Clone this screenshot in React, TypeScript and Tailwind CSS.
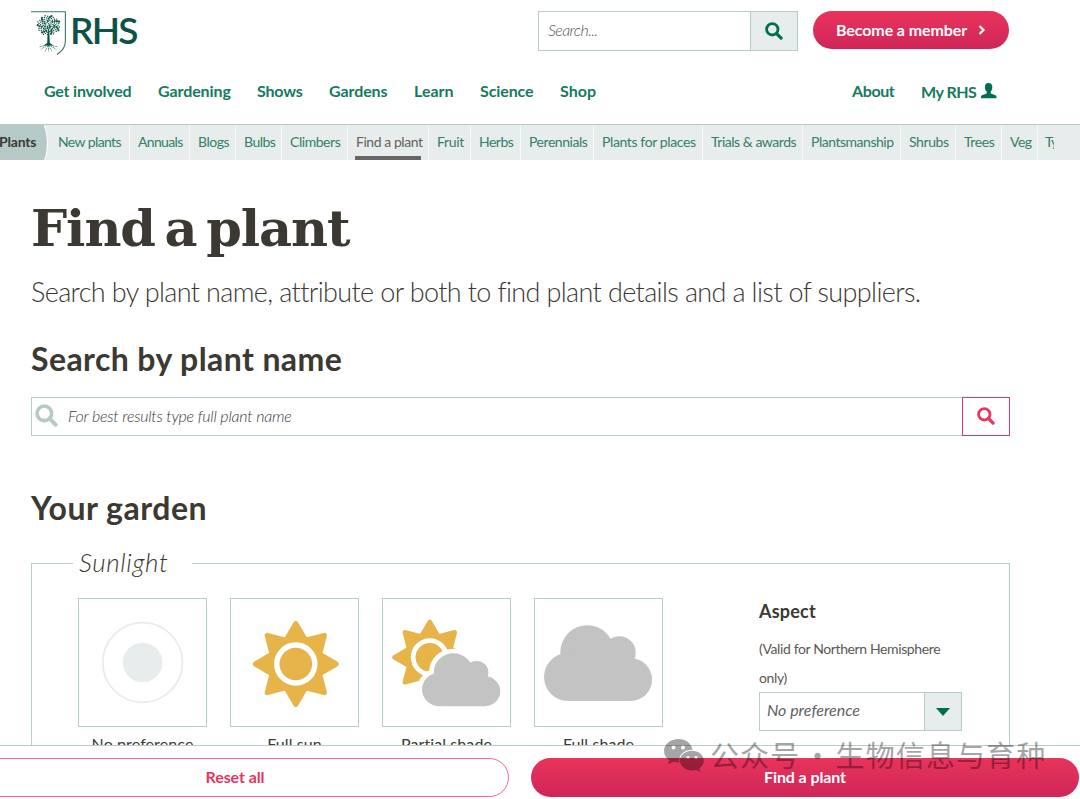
import React from "react";

const mainNav = [
  { label: "Get involved", cls: "w-[114px] tracking-[-0.2px]" },
  { label: "Gardening", cls: "w-[99px] tracking-[-0.1px]" },
  { label: "Shows", cls: "w-[72px] tracking-[-0.2px]" },
  { label: "Gardens", cls: "w-[85px] tracking-[-0.1px]" },
  { label: "Learn", cls: "w-[66px]" },
  { label: "Science", cls: "w-[80px] tracking-[-0.1px]" },
  { label: "Shop", cls: "w-[60px]" },
];

const subNav = [
  { label: "New plants", cls: "w-[80px] tracking-[-0.6px]" },
  { label: "Annuals", cls: "w-[60px] tracking-[-0.65px]" },
  { label: "Blogs", cls: "w-[46px] tracking-[-0.45px]" },
  { label: "Bulbs", cls: "w-[46px] tracking-[-0.5px]" },
  { label: "Climbers", cls: "w-[66px] tracking-[-0.45px]" },
  { label: "Find a plant", cls: "w-[81px] tracking-[-0.45px]", active: true },
  { label: "Fruit", cls: "w-[42px] tracking-[-0.35px]" },
  { label: "Herbs", cls: "w-[50px] tracking-[-0.5px]" },
  { label: "Perennials", cls: "w-[73px] tracking-[-0.45px]" },
  { label: "Plants for places", cls: "w-[109px] tracking-[-0.38px]" },
  { label: "Trials & awards", cls: "w-[100px] tracking-[-0.47px]" },
  { label: "Plantsmanship", cls: "w-[98px] tracking-[-0.48px]" },
  { label: "Shrubs", cls: "w-[55px] tracking-[-0.4px]" },
  { label: "Trees", cls: "w-[46px] tracking-[-0.4px]" },
  { label: "Veg", cls: "w-[36px] tracking-[-0.5px]" },
];

function starPoints(outer: number, inner: number) {
  return Array.from({ length: 16 }, (_, i) => {
    const r = i % 2 === 0 ? outer : inner;
    const a = (i * Math.PI) / 8;
    return `${(r * Math.sin(a)).toFixed(2)},${(-r * Math.cos(a)).toFixed(2)}`;
  }).join(" ");
}

function Sun() {
  return (
    <g>
      <polygon points={starPoints(40.5, 25.8)} fill="#e7b44a" stroke="#e7b44a" strokeWidth="5" strokeLinejoin="round" />
      <circle r="19" fill="#e7b44a" stroke="#fff" strokeWidth="5.4" />
    </g>
  );
}

function Cloud({ outline = 0 }: { outline?: number }) {
  const color = outline ? "#fff" : "#c3c3c3";
  return (
    <g fill={color} stroke={color} strokeWidth={outline}>
      <circle cx="43.3" cy="27.3" r="27" />
      <circle cx="75.3" cy="27.7" r="16.4" />
      <circle cx="24" cy="52" r="24" />
      <circle cx="86.7" cy="54.6" r="21.4" />
      <rect x="24" y="32" width="63" height="44" />
    </g>
  );
}

function NoPreferenceIcon() {
  return (
    <svg width="127" height="126">
      <circle cx="63.6" cy="63.5" r="39.8" fill="none" stroke="#e7edec" strokeWidth="1.8" />
      <circle cx="63.6" cy="63.5" r="19.8" fill="#e7edec" />
    </svg>
  );
}

function FullSunIcon() {
  return (
    <svg width="127" height="126">
      <g transform="translate(64.8 65)">
        <Sun />
      </g>
    </svg>
  );
}

function PartialShadeIcon() {
  return (
    <svg width="127" height="126">
      <g transform="translate(46.8 58.3) scale(0.875)">
        <Sun />
      </g>
      <g transform="translate(39 54) scale(0.724 0.7)">
        <Cloud outline={13} />
        <Cloud />
      </g>
    </svg>
  );
}

function FullShadeIcon() {
  return (
    <svg width="127" height="126">
      <g transform="translate(9 26)">
        <Cloud />
      </g>
    </svg>
  );
}

const sunlight = [
  { label: "No preference", icon: <NoPreferenceIcon /> },
  { label: "Full sun", icon: <FullSunIcon /> },
  { label: "Partial shade", icon: <PartialShadeIcon /> },
  { label: "Full shade", icon: <FullShadeIcon /> },
];

function SearchIcon({ size, className }: { size: number; className: string }) {
  return (
    <svg width={size} height={size} viewBox="0 0 18 18" fill="none" stroke="currentColor" className={className}>
      <circle cx="7.3" cy="7.3" r="5.7" strokeWidth="2.8" />
      <path d="M11.8 11.8L16.1 16.1" strokeWidth="3.2" strokeLinecap="round" />
    </svg>
  );
}

function TreeLogo() {
  const leaves = Array.from({ length: 85 }, (_, i) => {
    const r = 11.6 * Math.sqrt((i + 0.5) / 85);
    const a = i * 2.39996;
    return { x: 17.5 + r * Math.cos(a), y: 15.3 + r * 0.86 * Math.sin(a), s: i % 3 === 0 ? 1.1 : 0.72 };
  });
  return (
    <svg width="36" height="46" viewBox="0 0 36 46" fill="none" stroke="#0b5345">
      <path d="M0 1.7H34.4V31C34.4 37 31.5 41 26 44.5" strokeWidth="1.1" stroke="#3b7668" />
      {leaves.map((l, i) => (
        <circle key={i} cx={l.x} cy={l.y} r={l.s} fill="#0b5345" stroke="none" />
      ))}
      <path d="M17.5 19V33M17.5 24L12.5 18M17.5 23L23 17" strokeWidth="0.9" />
      <path d="M16.6 24H18.4L18.8 33L22.5 35.5H12.5L16.2 33Z" fill="#0b5345" stroke="none" />
      <g strokeWidth="0.6" strokeDasharray="2.2 0.7">
        <path d="M16 34C13 37 10 36 8 37M15.500 35.500C14 38 11 37.500 10 39.500M17 35C16.500 38 14.500 40 14 41.500M17.500 35V41.500M18 35C18.500 38 20.500 40 21 41.500M19.500 35.500C21 38 24 37.500 25 39.500M19 34C22 37 25 36 27 37" />
      </g>
    </svg>
  );
}

function WeChatIcon() {
  return (
    <svg width="40" height="34" viewBox="0 0 40 34">
      <path
        fillRule="evenodd"
        fill="#000"
        d="M14.5 0C6.5 0 0 5 0 12c0 4 2 7 5.300 9.300L4 25.500l5.300-2.700c2 .6 4.300.8 6.200.7C14 16 20 10.500 28.500 10.700 27.500 4.500 21.500 0 14.500 0ZM9.500 6.500a2 2 0 1 1 0 4a2 2 0 1 1 0-4ZM19 6.500a2 2 0 1 1 0 4a2 2 0 1 1 0-4Z"
      />
      <path
        fillRule="evenodd"
        fill="#000"
        d="M28 11.800c-6.700 0-12 4.200-12 9.800s5.300 9.800 12 9.800c1.500 0 3-.2 4.200-.6l4.300 2.200-1.100-3.700c2.800-1.900 4.400-4.600 4.400-7.700 0-5.600-5.300-9.800-11.800-9.800ZM24 17a1.600 1.600 0 1 1 0 3.200a1.600 1.600 0 1 1 0-3.200ZM32 17a1.600 1.600 0 1 1 0 3.200a1.600 1.600 0 1 1 0-3.200Z"
      />
    </svg>
  );
}

function Header() {
  return (
    <header className="h-[124px]">
      <div className="flex h-[70px] pl-[31px]">
        <div className="flex w-[507px] pt-[10px]">
          <TreeLogo />
          <span className="ml-[3px] text-[37px] font-semibold leading-[40px] tracking-[-1.8px] text-[#0b5345]">RHS</span>
        </div>
        <div className="mt-[11px] flex h-[40px] w-[260px] border border-[#b7cdc9]">
          <div className="flex w-[212px] items-center border-r border-[#b7cdc9] pb-[2px] pl-[9px] text-[16px] font-light italic tracking-[-0.6px] text-[#555]">
            Search...
          </div>
          <div className="flex flex-1 items-center justify-center bg-[#e7edec]">
            <SearchIcon size={18} className="text-[#006f51]" />
          </div>
        </div>
        <div className="ml-[15px] mt-[11px] flex h-[38px] w-[196px] items-center rounded-full bg-linear-to-b from-[#e9345b] to-[#cf2559] pl-[23px] text-[16px] font-bold text-white">
          <span className="w-[142px] whitespace-nowrap tracking-[-0.1px]">Become a member</span>
          <svg width="8" height="10" viewBox="0 0 8 10" fill="none" stroke="white" strokeWidth="2.2">
            <path d="M1.500 1L5.500 5L1.500 9" />
          </svg>
        </div>
      </div>
      <nav className="flex h-[41px] items-center pl-[44px] text-[16px] font-bold text-[#157a5e]">
        {mainNav.map((n) => (
          <span key={n.label} className={"shrink-0 whitespace-nowrap " + n.cls}>
            {n.label}
          </span>
        ))}
        <span className="ml-[232px] w-[69px] tracking-[-0.4px]">About</span>
        <span className="w-[60px] whitespace-nowrap pt-[2px] tracking-[-0.5px]">My RHS</span>
        <svg width="16" height="16" viewBox="0 0 16 16" fill="#006f51">
          <path d="M7.500 0C10 0 11.500 1.500 11.300 4.500C11.200 6.500 10.500 7.500 9.700 8.500V10.500C11.500 11.500 15.500 11.500 15.500 14V15.300H0V14C0 11.500 4 11.500 5.700 10.500V8.500C4.700 7.500 3.900 6.500 3.900 4.500C3.800 1.500 5 0 7.500 0Z" />
        </svg>
      </nav>
    </header>
  );
}

function SubNav() {
  return (
    <nav className="flex h-[36px] overflow-hidden border-t border-[#b7cdc9] bg-[#e7edec] text-[14px] leading-[34px] text-[#347f67]">
      <div className="relative w-[50px] shrink-0 overflow-hidden">
        <div className="absolute -left-[56px] -top-[34px] size-[104px] rounded-full border-r border-white bg-[#b5cac7]" />
        <span className="relative -ml-px font-bold tracking-[-0.2px] text-[#3c3832]">Plants</span>
      </div>
      {subNav.map((n) => (
        <div key={n.label} className={"flex shrink-0 flex-col whitespace-nowrap border-r border-[#f8faf9] px-[7px] " + n.cls}>
          <span className={n.active ? "h-[35px] border-b-4 border-[#666] pl-px text-[#65605b]" : "pl-px"}>{n.label}</span>
        </div>
      ))}
      <div className="w-[16px] shrink-0 overflow-hidden whitespace-nowrap pl-[7px] tracking-[-1px]">Ty</div>
    </nav>
  );
}

function Garden() {
  return (
    <fieldset className="ml-[31px] h-[260px] w-[979px] border border-[#b7cdc9] pl-[41px]">
      <legend className="h-[36px] w-[119px] pl-[6px] text-[26px] font-light italic leading-[34px] tracking-[0.6px] text-[#3c3832]">Sunlight</legend>
      <div className="flex pl-[5px] pt-[17px]">
        <div className="flex w-[681px] gap-[23px]">
          {sunlight.map((s) => (
            <div key={s.label} className="w-[129px] shrink-0 text-center">
              <div className="h-[129px] border border-[#b7cdc9]">{s.icon}</div>
              <div className="mt-[6px] text-[16px] leading-[22px] tracking-[0.1px] text-[#3c3832]">{s.label}</div>
            </div>
          ))}
        </div>
        <div className="w-[203px] text-[#3c3832]">
          <div className="pt-px text-[18px] font-bold leading-[25px] tracking-[0.2px]">Aspect</div>
          <div className="mt-[10px] whitespace-nowrap text-[14px] leading-[29px] tracking-[-0.38px] text-[#5c5853]">
            (Valid for Northern Hemisphere
            <br />
            only)
          </div>
          <div className="flex h-[39px] border border-[#b7cdc9]">
            <div className="w-[165px] border-r border-[#b7cdc9] pl-[7px] text-[16px] italic leading-[34px] text-[#5f5f5f]">No preference</div>
            <div className="flex flex-1 items-center justify-center bg-[#e7edec]">
              <svg width="14" height="9">
                <path d="M0 1H14L7 9Z" fill="#006f51" />
              </svg>
            </div>
          </div>
        </div>
      </div>
    </fieldset>
  );
}

export default function App() {
  return (
    <div className="relative h-[799px] w-[1080px] overflow-hidden bg-white font-['Lato','Noto_Sans_CJK_SC',sans-serif]">
      <Header />
      <SubNav />
      <main>
        <section className="h-[326px] pl-[31px] pt-[32px] text-[#3c3832]">
          <h1 className="h-[72px] whitespace-nowrap font-['DejaVu_Serif',serif] text-[51px] font-bold leading-[72px] tracking-[-1.1px] [word-spacing:-7px]">
            Find a plant
          </h1>
          <p className="mt-[8px] whitespace-nowrap text-[27px] font-light leading-[40px] tracking-[-0.63px]">
            Search by plant name, attribute or both to find plant details and a list of suppliers.
          </p>
          <h2 className="mt-[27px] whitespace-nowrap text-[32px] font-bold leading-[40px] tracking-[0.4px]">Search by plant name</h2>
          <div className="mt-[18px] flex h-[39px] w-[979px]">
            <div className="flex w-[931px] items-center border border-r-0 border-[#b7cdc9] pb-[2px] pl-[3px]">
              <SearchIcon size={23} className="text-[#b5cac7]" />
              <span className="ml-[10px] text-[16px] font-light italic tracking-[-0.24px]">For best results type full plant name</span>
            </div>
            <div className="flex w-[48px] items-center justify-center border border-[#d93a62] pb-[2px]">
              <SearchIcon size={18} className="text-[#e6365d]" />
            </div>
          </div>
        </section>
        <h2 className="ml-[31px] h-[59px] text-[32px] font-bold leading-[44px] tracking-[0.5px] text-[#3c3832]">Your garden</h2>
        <Garden />
      </main>

      <footer className="absolute bottom-0 left-0 h-[54px] w-full overflow-hidden border-t border-[#b7cdc9] bg-white">
        <div className="-ml-[39px] mt-[12px] flex gap-[22px] text-[16px] font-bold">
          <button className="h-[39px] w-[548px] shrink-0 rounded-full border border-[#ed6d8a] pb-[2px] tracking-[-0.1px] text-[#e6365d]">Reset all</button>
          <button className="h-[39px] w-[548px] shrink-0 rounded-full bg-linear-to-b from-[#e9345b] to-[#cf2559] pb-[2px] tracking-[-0.1px] text-white">
            Find a plant
          </button>
        </div>
      </footer>

      <div className="absolute left-[664px] top-[739px] flex opacity-35">
        <WeChatIcon />
        <span className="-mt-[2px] ml-[6px] whitespace-nowrap font-['Noto_Sans_CJK_SC',sans-serif] text-[29px] leading-[34px] tracking-[1.1px] text-black [word-spacing:-5px]">
          公众号 · 生物信息与育种
        </span>
      </div>
    </div>
  );
}
